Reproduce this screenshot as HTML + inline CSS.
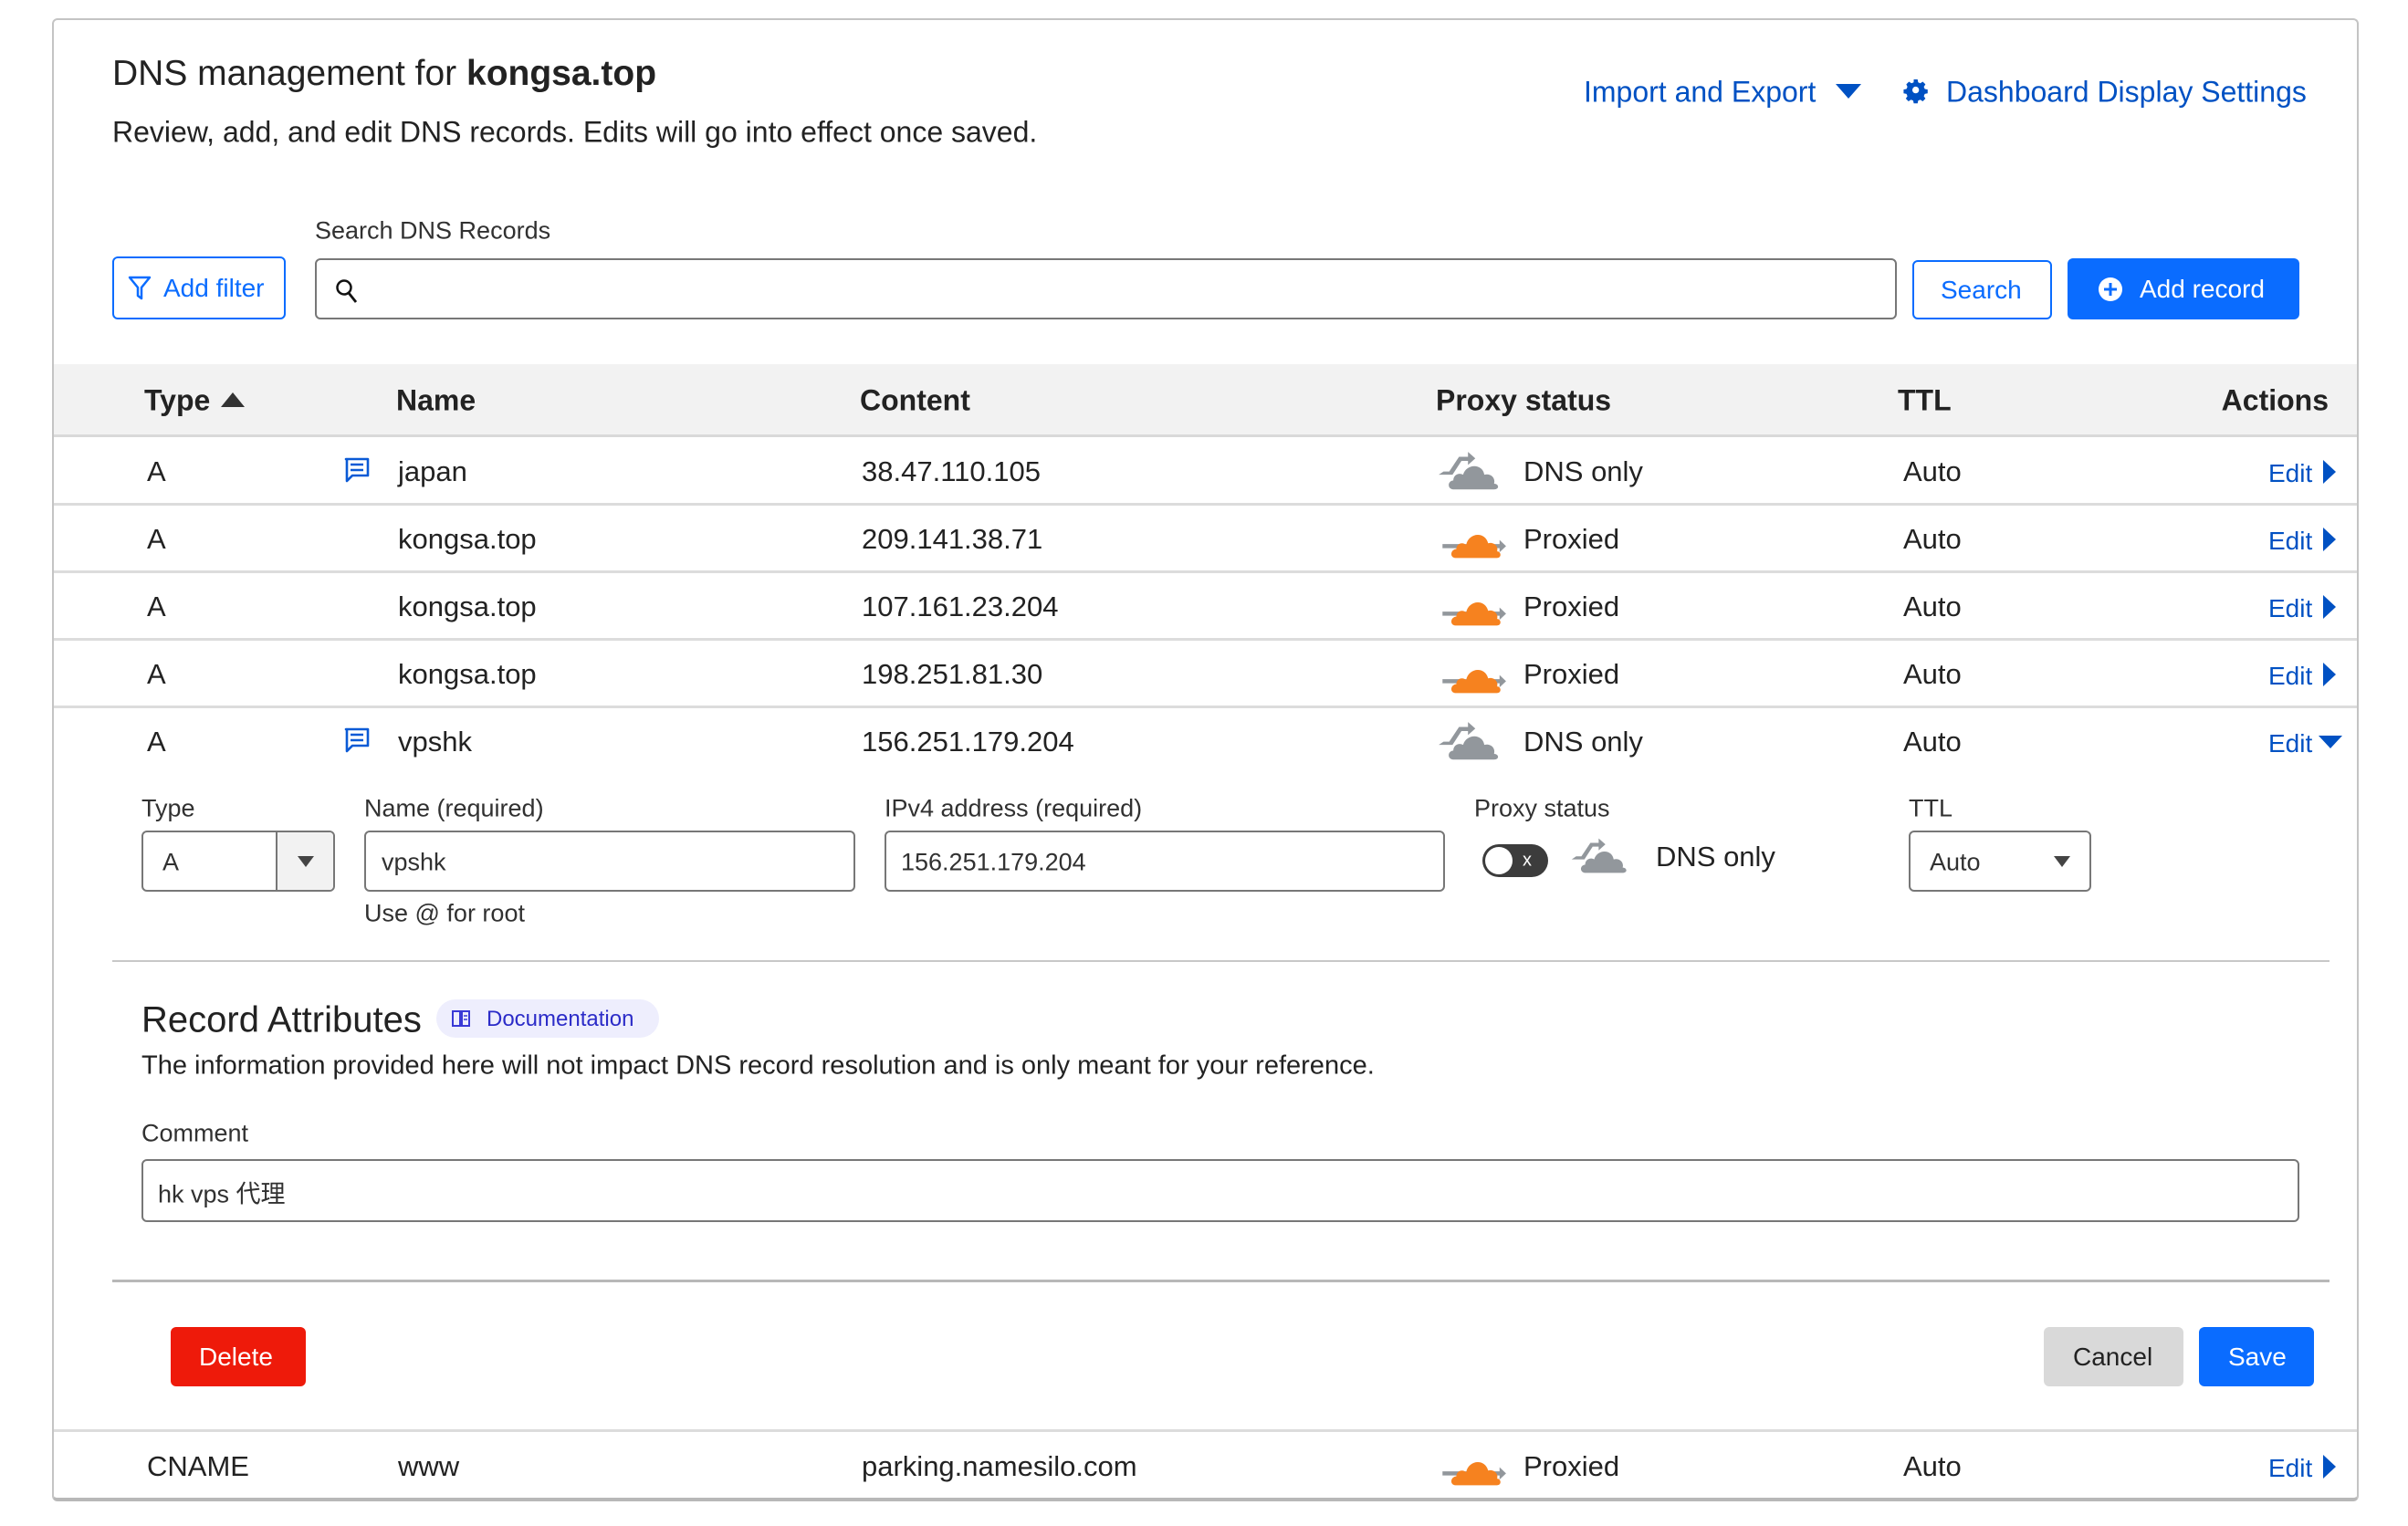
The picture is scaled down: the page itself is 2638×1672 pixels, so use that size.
<!DOCTYPE html>
<html><head><meta charset="utf-8">
<style>
*{box-sizing:border-box;margin:0;padding:0}
body{width:2638px;height:1672px;background:#fff;font-family:"Liberation Sans","Noto Sans CJK SC",sans-serif;color:#313131;position:relative;overflow:hidden}
.a{position:absolute;white-space:nowrap}
.c{position:absolute;white-space:nowrap;transform:translateY(-50%)}
.card{position:absolute;left:57px;top:20px;width:2527px;height:1625px;border:2px solid #c4c4c4;border-bottom:4px solid #b8b8b8;border-radius:6px}
.blue{color:#0051c3}
.hdr{position:absolute;left:59px;top:399px;width:2523px;height:80px;background:#f2f2f2;border-bottom:3px solid #d9d9d9}
.line{position:absolute;left:59px;width:2523px;height:3px;background:#dcdcdc}
.row{font-size:31px;color:#222}
.th{font-size:32px;font-weight:bold;color:#222}
.inp{position:absolute;border:2px solid #777;border-radius:6px;background:#fff}
.lbl{font-size:27px;color:#313131}
</style></head><body>
<div class="card"></div>

<div class="c" style="left:123px;top:81px;font-size:39px;color:#222">DNS management for <b>kongsa.top</b></div>
<div class="c" style="left:123px;top:145px;font-size:32px;color:#222">Review, add, and edit DNS records. Edits will go into effect once saved.</div>

<div class="c blue" style="left:1735px;top:101px;font-size:32px">Import and Export</div>
<svg class="a" style="left:2011px;top:92px" width="28" height="18"><path d="M0 0H28L14 16Z" fill="#0051c3"/></svg>
<svg class="a" style="left:2085px;top:86px" width="28" height="28" viewBox="0 0 24 24"><path fill="#0051c3" d="M10 1h4l.6 3 2.2 1 2.6-1.7 2.8 2.8L20.5 8.7l1 2.3 3 .5v4l-3 .6-1 2.3 1.7 2.6-2.8 2.8-2.6-1.7-2.2 1-.6 2.9h-4l-.6-2.9-2.300-1-2.6 1.7-2.8-2.8 1.7-2.6-1-2.3-3-.6v-4l3-.5 1-2.3L2.2 6.1 5 3.3l2.6 1.7 2.3-1zM12 8.5a3.5 3.5 0 1 0 0 7 3.5 3.5 0 0 0 0-7z" transform="scale(.9) translate(1 0)"/></svg>
<div class="c blue" style="left:2132px;top:101px;font-size:32px">Dashboard Display Settings</div>

<div class="c lbl" style="left:345px;top:253px">Search DNS Records</div>
<div class="a" style="left:123px;top:281px;width:190px;height:69px;border:2px solid #0a6cff;border-radius:6px"></div>
<svg class="a" style="left:140px;top:302px" width="26" height="28" viewBox="0 0 26 28"><path d="M2 2H24L15 13V25L11 22V13Z" fill="none" stroke="#0a6cff" stroke-width="2.5" stroke-linejoin="round"/></svg>
<div class="c" style="left:179px;top:316px;font-size:28px;color:#0a6cff">Add filter</div>
<div class="inp" style="left:345px;top:283px;width:1733px;height:67px"></div>
<svg class="a" style="left:366px;top:304px" width="28" height="30" viewBox="0 0 28 30"><circle cx="11" cy="11" r="7.5" fill="none" stroke="#111" stroke-width="2.5"/><path d="M16 17L24 27" stroke="#111" stroke-width="2.8"/></svg>
<div class="a" style="left:2095px;top:285px;width:153px;height:65px;border:2px solid #0a6cff;border-radius:6px"></div>
<div class="c" style="left:2126px;top:318px;font-size:28px;color:#0a6cff">Search</div>
<div class="a" style="left:2265px;top:283px;width:254px;height:67px;background:#0a6cff;border-radius:6px"></div>
<svg class="a" style="left:2298px;top:303px" width="28" height="28"><circle cx="14" cy="14" r="13" fill="#fff"/><path d="M14 7V21M7 14H21" stroke="#0a6cff" stroke-width="3"/></svg>
<div class="c" style="left:2344px;top:317px;font-size:28px;color:#fff">Add record</div>

<div class="hdr"></div>
<div class="c th" style="left:158px;top:439px">Type</div>
<svg class="a" style="left:242px;top:430px" width="26" height="16"><path d="M0 16H26L13 0Z" fill="#333"/></svg>
<div class="c th" style="left:434px;top:439px">Name</div>
<div class="c th" style="left:942px;top:439px">Content</div>
<div class="c th" style="left:1573px;top:439px">Proxy status</div>
<div class="c th" style="left:2079px;top:439px">TTL</div>
<div class="c th" style="right:87px;top:439px">Actions</div>

<div class="line" style="top:551px"></div>
<div class="line" style="top:625px"></div>
<div class="line" style="top:699px"></div>
<div class="line" style="top:773px"></div>
<div class="line" style="top:1566px"></div>

<svg width="0" height="0" style="position:absolute">
<defs>
<symbol id="gc" viewBox="0 0 80 56"><path d="M2 36L8 32L15 32L27 14L38 14L38 8L47 16L38 24L38 19L30 19L19 36L11 36Z" fill="#92979c"/><path d="M20 54C13 54 12 44 20 43C20 36 27 33 32 36C36 22 56 22 58 36C66 34 72 40 70 47C76 47 77 54 70 54Z" fill="#92979c"/></symbol>
<symbol id="oc" viewBox="0 0 80 56"><path d="M0 36H70V31L78 38.5L70 46V41H0Z" fill="#92979c"/><path d="M16 53C9 53 9 43 17 42C17 35 25 33 29 37C32 22 52 20 56 35C63 33 69 39 67 45C72 45 73 53 67 53Z" fill="#f6821f"/></symbol>
<symbol id="cm" viewBox="0 0 30 30"><path d="M3 3H27V21H10L4 27V3Z" fill="none" stroke="#0a5ad6" stroke-width="2.6" stroke-linejoin="round"/><path d="M8 9H22M8 15H22" stroke="#0a5ad6" stroke-width="2.6"/></symbol>
</defs></svg>

<!-- rows -->
<div class="c row" style="left:161px;top:517px">A</div>
<svg class="a" style="left:376px;top:500px" width="30" height="30"><use href="#cm"/></svg>
<div class="c row" style="left:436px;top:517px">japan</div>
<div class="c row" style="left:944px;top:517px">38.47.110.105</div>
<svg class="a" style="left:1574px;top:488px" width="72" height="50"><use href="#gc"/></svg>
<div class="c row" style="left:1669px;top:517px">DNS only</div>
<div class="c row" style="left:2085px;top:517px">Auto</div>
<div class="c blue" style="left:2485px;top:519px;font-size:28px">Edit</div>
<svg class="a" style="left:2545px;top:504px" width="14" height="26"><path d="M0 0L14 13L0 26Z" fill="#0051c3"/></svg>

<div class="c row" style="left:161px;top:591px">A</div>
<div class="c row" style="left:436px;top:591px">kongsa.top</div>
<div class="c row" style="left:944px;top:591px">209.141.38.71</div>
<svg class="a" style="left:1580px;top:564px" width="72" height="50"><use href="#oc"/></svg>
<div class="c row" style="left:1669px;top:591px">Proxied</div>
<div class="c row" style="left:2085px;top:591px">Auto</div>
<div class="c blue" style="left:2485px;top:593px;font-size:28px">Edit</div>
<svg class="a" style="left:2545px;top:578px" width="14" height="26"><path d="M0 0L14 13L0 26Z" fill="#0051c3"/></svg>

<div class="c row" style="left:161px;top:665px">A</div>
<div class="c row" style="left:436px;top:665px">kongsa.top</div>
<div class="c row" style="left:944px;top:665px">107.161.23.204</div>
<svg class="a" style="left:1580px;top:638px" width="72" height="50"><use href="#oc"/></svg>
<div class="c row" style="left:1669px;top:665px">Proxied</div>
<div class="c row" style="left:2085px;top:665px">Auto</div>
<div class="c blue" style="left:2485px;top:667px;font-size:28px">Edit</div>
<svg class="a" style="left:2545px;top:652px" width="14" height="26"><path d="M0 0L14 13L0 26Z" fill="#0051c3"/></svg>

<div class="c row" style="left:161px;top:739px">A</div>
<div class="c row" style="left:436px;top:739px">kongsa.top</div>
<div class="c row" style="left:944px;top:739px">198.251.81.30</div>
<svg class="a" style="left:1580px;top:712px" width="72" height="50"><use href="#oc"/></svg>
<div class="c row" style="left:1669px;top:739px">Proxied</div>
<div class="c row" style="left:2085px;top:739px">Auto</div>
<div class="c blue" style="left:2485px;top:741px;font-size:28px">Edit</div>
<svg class="a" style="left:2545px;top:726px" width="14" height="26"><path d="M0 0L14 13L0 26Z" fill="#0051c3"/></svg>

<div class="c row" style="left:161px;top:813px">A</div>
<svg class="a" style="left:376px;top:796px" width="30" height="30"><use href="#cm"/></svg>
<div class="c row" style="left:436px;top:813px">vpshk</div>
<div class="c row" style="left:944px;top:813px">156.251.179.204</div>
<svg class="a" style="left:1574px;top:784px" width="72" height="50"><use href="#gc"/></svg>
<div class="c row" style="left:1669px;top:813px">DNS only</div>
<div class="c row" style="left:2085px;top:813px">Auto</div>
<div class="c blue" style="left:2485px;top:815px;font-size:28px">Edit</div>
<svg class="a" style="left:2540px;top:806px" width="26" height="14"><path d="M0 0H26L13 14Z" fill="#0051c3"/></svg>

<!-- edit form -->
<div class="c lbl" style="left:155px;top:886px">Type</div>
<div class="c lbl" style="left:399px;top:886px">Name (required)</div>
<div class="c lbl" style="left:969px;top:886px">IPv4 address (required)</div>
<div class="c lbl" style="left:1615px;top:886px">Proxy status</div>
<div class="c lbl" style="left:2091px;top:886px">TTL</div>

<div class="inp" style="left:155px;top:910px;width:212px;height:67px"></div>
<div class="a" style="left:302px;top:912px;width:63px;height:63px;background:#f2f2f2;border-left:2px solid #777;border-radius:0 4px 4px 0"></div>
<svg class="a" style="left:326px;top:938px" width="18" height="12"><path d="M0 0H18L9 12Z" fill="#444"/></svg>
<div class="c" style="left:178px;top:945px;font-size:27px">A</div>
<div class="inp" style="left:399px;top:910px;width:538px;height:67px"></div>
<div class="c" style="left:418px;top:945px;font-size:27px">vpshk</div>
<div class="inp" style="left:969px;top:910px;width:614px;height:67px"></div>
<div class="c" style="left:987px;top:945px;font-size:27px">156.251.179.204</div>
<div class="a" style="left:1624px;top:925px;width:72px;height:36px;background:#3c3c3c;border-radius:18px"></div>
<div class="a" style="left:1627px;top:928px;width:30px;height:30px;background:#fff;border-radius:50%"></div>
<div class="c" style="left:1668px;top:943px;font-size:20px;color:#fff">x</div>
<svg class="a" style="left:1720px;top:912px" width="66" height="46"><use href="#gc"/></svg>
<div class="c row" style="left:1814px;top:939px">DNS only</div>
<div class="inp" style="left:2091px;top:910px;width:200px;height:67px"></div>
<div class="c" style="left:2114px;top:945px;font-size:27px">Auto</div>
<svg class="a" style="left:2250px;top:938px" width="18" height="12"><path d="M0 0H18L9 12Z" fill="#444"/></svg>
<div class="c lbl" style="left:399px;top:1001px">Use @ for root</div>

<div class="a" style="left:123px;top:1052px;width:2429px;height:2px;background:#c8c8c8"></div>

<div class="c" style="left:155px;top:1118px;font-size:40px;color:#222">Record Attributes</div>
<div class="a" style="left:478px;top:1095px;width:244px;height:42px;background:#eeeefd;border-radius:21px"></div>
<svg class="a" style="left:494px;top:1105px" width="22" height="22" viewBox="0 0 22 22"><path d="M2 3H10V19H2ZM12 3H20V19H12Z" fill="none" stroke="#3a3ad6" stroke-width="2"/><path d="M14 8H18M14 12H18" stroke="#3a3ad6" stroke-width="1.6"/></svg>
<div class="c" style="left:533px;top:1117px;font-size:24px;color:#2c2cc8">Documentation</div>
<div class="c" style="left:155px;top:1168px;font-size:29px;color:#222">The information provided here will not impact DNS record resolution and is only meant for your reference.</div>
<div class="c lbl" style="left:155px;top:1242px">Comment</div>
<div class="inp" style="left:155px;top:1270px;width:2364px;height:69px"></div>
<div class="c" style="left:173px;top:1306px;font-size:27px">hk vps 代理</div>

<div class="a" style="left:123px;top:1402px;width:2429px;height:3px;background:#b8b8b8"></div>

<div class="a" style="left:187px;top:1454px;width:148px;height:65px;background:#ee1a0a;border-radius:6px"></div>
<div class="c" style="left:218px;top:1487px;font-size:28px;color:#fff">Delete</div>
<div class="a" style="left:2239px;top:1454px;width:153px;height:65px;background:#d9d9d9;border-radius:6px"></div>
<div class="c" style="left:2271px;top:1487px;font-size:28px;color:#222">Cancel</div>
<div class="a" style="left:2409px;top:1454px;width:126px;height:65px;background:#0a6cff;border-radius:6px"></div>
<div class="c" style="left:2441px;top:1487px;font-size:28px;color:#fff">Save</div>

<div class="c row" style="left:161px;top:1607px">CNAME</div>
<div class="c row" style="left:436px;top:1607px">www</div>
<div class="c row" style="left:944px;top:1607px">parking.namesilo.com</div>
<svg class="a" style="left:1580px;top:1580px" width="72" height="50"><use href="#oc"/></svg>
<div class="c row" style="left:1669px;top:1607px">Proxied</div>
<div class="c row" style="left:2085px;top:1607px">Auto</div>
<div class="c blue" style="left:2485px;top:1609px;font-size:28px">Edit</div>
<svg class="a" style="left:2545px;top:1594px" width="14" height="26"><path d="M0 0L14 13L0 26Z" fill="#0051c3"/></svg>
</body></html>
